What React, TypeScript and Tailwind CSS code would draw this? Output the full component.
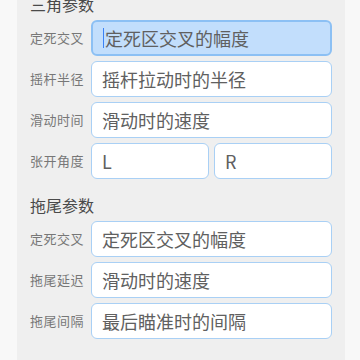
const font = { fontFamily: '"Noto Sans CJK SC", "Noto Sans", sans-serif' };

type Row = { label: string; hint?: string; pair?: [string, string]; focused?: boolean };

const triangle: Row[] = [
  { label: "定死交叉", hint: "定死区交叉的幅度", focused: true },
  { label: "摇杆半径", hint: "摇杆拉动时的半径" },
  { label: "滑动时间", hint: "滑动时的速度" },
  { label: "张开角度", pair: ["L", "R"] },
];

const tail: Row[] = [
  { label: "定死交叉", hint: "定死区交叉的幅度" },
  { label: "拖尾延迟", hint: "滑动时的速度" },
  { label: "拖尾间隔", hint: "最后瞄准时的间隔" },
];

function Field({ text, focused }: { text: string; focused?: boolean }) {
  return (
    <div
      className={
        "flex h-[36px] flex-1 items-center rounded-[6px] pl-[10px] text-[18px] text-[#606060] " +
        (focused
          ? "border-2 border-[#8cc0f4] bg-[#c2defc] pl-[9px]"
          : "border-[1.5px] border-[#a9d0f5] bg-white")
      }
    >
      {focused && <span className="mr-[1px] h-[20px] w-[1px] bg-[#3b82f6]" />}
      <span>{text}</span>
    </div>
  );
}

function Section({ title, rows, first }: { title: string; rows: Row[]; first?: boolean }) {
  return (
    <div className={first ? "" : "mt-[16px]"}>
      <div className="h-[20px] text-[16px] leading-[20px] text-[#4a4a4a]">{title}</div>
      <div className="mt-[6px] flex flex-col gap-[5px]">
        {rows.map((r) => (
          <div key={r.label + title} className="flex items-center">
            <div className="w-[61px] text-[13px] tracking-[0.5px] text-[#777]">{r.label}</div>
            <div className="flex w-[241px] gap-[5px]">
              {r.pair ? (
                r.pair.map((p) => <Field key={p} text={p} />)
              ) : (
                <Field text={r.hint ?? ""} focused={r.focused} />
              )}
            </div>
          </div>
        ))}
      </div>
    </div>
  );
}

export default function App() {
  return (
    <div className="flex h-[360px] w-[360px] overflow-hidden bg-[#f8f8f8]" style={font}>
      <div className="ml-[17px] h-full w-[328px] bg-[#efefef] pl-[13px]">
        <div className="-mt-[6px]">
          <Section title="三角参数" rows={triangle} first />
          <Section title="拖尾参数" rows={tail} />
        </div>
      </div>
    </div>
  );
}
